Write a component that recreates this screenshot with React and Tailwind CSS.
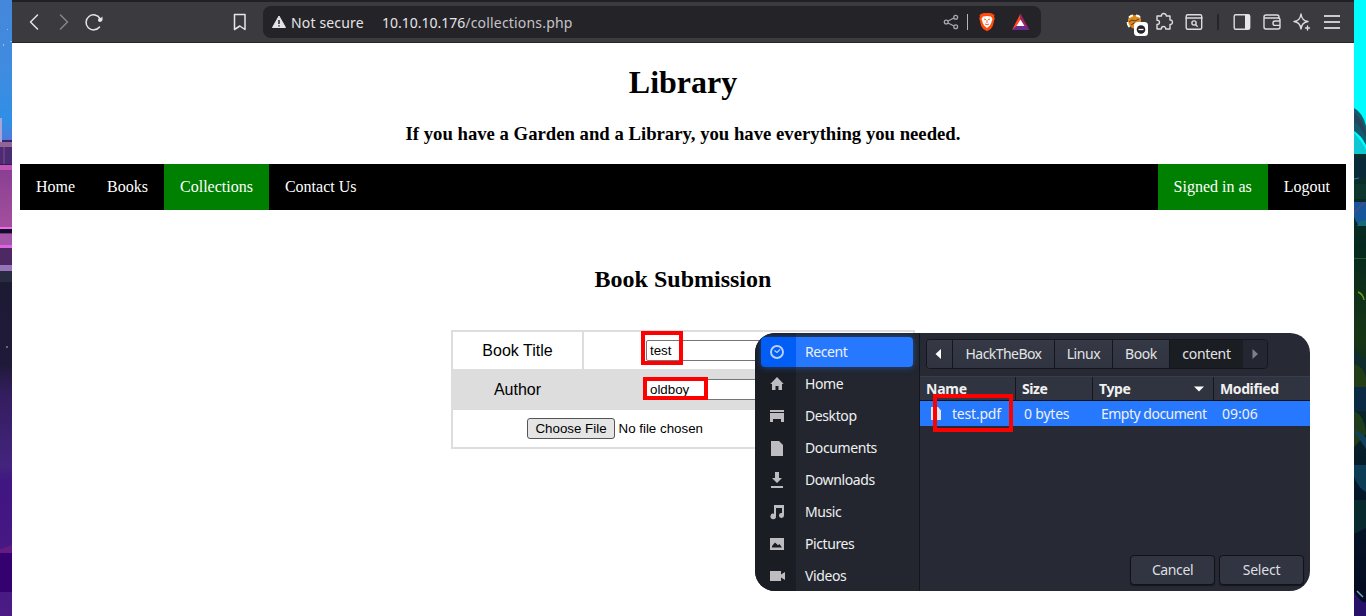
import React from "react";

const navItem = "flex h-[46px] items-center px-4 text-base text-white";

function LeftWallpaper() {
  return (
    <svg className="h-[616px] w-3 shrink-0" viewBox="0 0 12 616" preserveAspectRatio="none" shapeRendering="crispEdges">
      <defs>
        <linearGradient id="sky" x1="0" y1="0" x2="0" y2="1">
          <stop offset="0" stopColor="#4487db" />
          <stop offset=".5" stopColor="#3f8ce0" />
          <stop offset=".85" stopColor="#2f8fe6" />
          <stop offset="1" stopColor="#5079d8" />
        </linearGradient>
        <linearGradient id="wall" x1="0" y1="0" x2="0" y2="1">
          <stop offset="0" stopColor="#8a3f92" />
          <stop offset="1" stopColor="#a44f9e" />
        </linearGradient>
        <linearGradient id="floor" x1="0" y1="0" x2="0" y2="1">
          <stop offset="0" stopColor="#1d1a33" />
          <stop offset=".25" stopColor="#201a3a" />
          <stop offset=".33" stopColor="#331d5e" />
          <stop offset=".55" stopColor="#43247e" />
          <stop offset=".6" stopColor="#401682" />
          <stop offset="1" stopColor="#4c1b85" />
        </linearGradient>
      </defs>
      <rect width="12" height="142" fill="url(#sky)" />
      <rect x="7" y="29" width="1" height="1" fill="#8fc4f2" />
      <rect x="3" y="44" width="1" height="2" fill="#8fc4f2" />
      <rect x="10" y="41" width="2" height="1" fill="#8fc4f2" />
      <rect y="118" width="2" height="24" fill="#a9a3da" />
      <rect x="2" y="140" width="10" height="2" fill="#39236f" />
      <rect y="142" width="12" height="5" fill="#916497" />
      <rect y="147" width="12" height="17" fill="#4a2c72" />
      <rect x="3" y="147" width="2" height="17" fill="#6d3a80" />
      <rect y="164" width="12" height="1" fill="#3b1658" />
      <rect y="165" width="12" height="5" fill="#c057b4" />
      <rect y="170" width="12" height="57" fill="url(#wall)" />
      <rect y="227" width="12" height="2" fill="#f566f1" />
      <rect y="229" width="12" height="4" fill="#100d28" />
      <rect y="233" width="12" height="1" fill="#6c3b79" />
      <rect y="234" width="12" height="11" fill="#a456a8" />
      <rect y="245" width="12" height="3" fill="#e061e4" />
      <rect y="248" width="12" height="17" fill="#4c2963" />
      <rect y="265" width="12" height="6" fill="#9674b7" />
      <rect y="271" width="12" height="11" fill="#292b43" />
      <rect y="282" width="12" height="334" fill="url(#floor)" />
      <rect x="6" y="346" width="2" height="2" fill="#7b5797" />
      <path d="M0 549 12 545V553H0Z" fill="#651a84" />
      <rect y="553" width="12" height="39" fill="#35006f" />
    </svg>
  );
}

function RightWallpaper() {
  return (
    <svg className="h-[616px] w-3 shrink-0" viewBox="0 0 12 616" preserveAspectRatio="none">
      <defs>
        <linearGradient id="night" x1="0" y1="0" x2="0" y2="1">
          <stop offset="0" stopColor="#0d302f" />
          <stop offset=".2" stopColor="#06291f" />
          <stop offset=".4" stopColor="#173515" />
          <stop offset=".5" stopColor="#0a2925" />
          <stop offset=".7" stopColor="#041a2a" />
          <stop offset="1" stopColor="#050820" />
        </linearGradient>
      </defs>
      <rect width="12" height="155" fill="#00fcff" />
      <path d="M0 108Q9 113 12 126V145Q7 135 0 131Z" fill="#145c6c" />
      <path d="M0 113Q8 119 12 132V137Q5 124 0 122Z" fill="#25455c" />
      <path d="M0 133Q8 141 12 150V154H0Z" fill="#10c8d4" />
      <rect y="154" width="12" height="462" fill="url(#night)" />
      <rect y="158" width="12" height="20" fill="#092b39" />
      <path d="M0 179 5 178" stroke="#2478b4" />
      <rect y="184" width="12" height="15" fill="#0d372c" />
      <path d="M0 202H12V224Q5 230 0 217Z" fill="#16579b" />
      <path d="M0 213 11 202" stroke="#8b3c69" />
      <path d="M3 226Q5 220 12 220V226Z" fill="#186a78" />
      <path d="M0 258.500H12" stroke="#235b2c" />
      <path d="M4 292Q9 294 10 300" stroke="#6c9c10" strokeWidth="1.500" fill="none" />
      <path d="M0 347Q6 357 12 358V384H0Z" fill="#102d2e" />
      <path d="M0 364Q9 366 12 378V387H0Z" fill="#233d17" />
      <rect y="387" width="12" height="24" fill="#0b2a43" />
      <path d="M0 411Q11 416 12 434L0 447Z" fill="#203d1b" />
      <path d="M0 431Q7 431 12 438V449Z" fill="#10415a" />
      <path d="M0 465H12V492Q5 489 0 477Z" fill="#0c3d56" />
      <path d="M0 500H12V528L0 534Z" fill="#08292d" />
      <path d="M3 591 9 597" stroke="#67afc0" strokeWidth="1.500" />
      <path d="M0 592Q8 604 12 602V616H0Z" fill="#271269" />
    </svg>
  );
}

function BrowserBar() {
  const line = { fill: "none", stroke: "#e6e5ea", strokeWidth: 1.5, strokeLinecap: "round", strokeLinejoin: "round" };
  return (
    <div className="flex h-[43px] items-start border-b border-t-2 border-b-[#26252a] border-t-[#212026] bg-[#3b3a3f] text-[14px] text-[#e4e3e8]" style={{ fontFamily: '"Noto Sans", sans-serif' }}>
      <svg className="h-10 w-[251px] shrink-0" viewBox="12 2 251 40">
        <g {...line}>
          <path d="M37.500 15 30.500 22 37.500 29" />
          <path d="M60.500 15 67.500 22 60.500 29" stroke="#85848a" />
          <path d="M100 18.500A7.500 7.500 0 1 0 99.500 27" />
          <path d="M234.500 14.500h10.500V29.500l-5.200-3.500-5.300 3.500Z" />
        </g>
        <path d="M98 20.500h4.500v-4Z" fill="#e6e5ea" />
        <circle cx="100" cy="20" r="2" fill="#e6e5ea" />
      </svg>
      <div className="mt-1 flex h-8 w-[778px] shrink-0 items-center rounded-lg bg-[#242328]">
        <svg className="ml-[9px] h-4 w-[14px] shrink-0" viewBox="0 0 14 16">
          <path d="M7 2 13.500 13.500H.5Z" fill="#e4e3e8" stroke="#e4e3e8" strokeLinejoin="round" />
          <path d="M7 6v4M7 11.200v1.300" stroke="#242328" strokeWidth="1.500" />
        </svg>
        <span className="ml-[5px] w-[91px] whitespace-nowrap tracking-[0.15px]">Not secure</span>
        <span className="whitespace-nowrap text-[#c4c3c8]"><span className="text-[#e4e3e8]">10.10.10.176</span><span className="tracking-[0.18px]">/collections.php</span></span>
        <svg className="ml-auto h-8 w-[101px] shrink-0" viewBox="940 6 101 32">
          <g fill="none" stroke="#a9a8ae" strokeWidth="1.300">
            <path d="M948 21 954 18M948 23 954 26" />
            <circle cx="946.200" cy="22" r="1.900" />
            <circle cx="955.700" cy="17.200" r="1.900" />
            <circle cx="955.700" cy="26.800" r="1.900" />
          </g>
          <path d="M967.500 14v16" stroke="#b5b4ba" />
          <path d="m982 13.500 2-.5h6l2 .5 2.500 1.500-.5 2 .8 1-2 8-2 3-3.800 2.200-3.800-2.200-2-3-2-8 .8-1-.5-2Z" fill="#ff4b0c" />
          <path d="m983 16.500 4-.5 4 .5 1.500 2.500-1.500 4.500-1.500 2.500-2.500 2-2.500-2-1.500-2.500-1.500-4.500Z" fill="#fff" />
          <path d="m984 19 2 .8M990 19l-2 .8M987 20v3M985 24l2 .8 2-.8" stroke="#ff4b0c" fill="none" strokeWidth=".9" />
          <path d="M1020.500 13.500 1012 30 1020.500 24Z" fill="#ff4726" />
          <path d="M1020.500 13.500 1029.500 30 1020.500 24Z" fill="#9e1f63" />
          <path d="M1012 30h17.500l-5-4h-8Z" fill="#662d91" />
          <path d="m1020.500 19.500 4 6.500h-8Z" fill="#fff" />
        </svg>
      </div>
      <svg className="h-10 w-[313px] shrink-0" viewBox="1041 2 313 40">
        <path d="M1128 19q2-4 7-4 4 0 6 4v6l-6 4q-5-1-7-6Z" fill="#df8a1c" />
        <path d="M1129 17.500q2-2 4-2M1136 15.500q3 0 4 2M1127.500 22q0 3 2 5" stroke="#fff" strokeWidth="1.800" fill="none" />
        <path d="m1129 22 3-2 3 1 4-2M1131 25l3-2 4 .5" stroke="#5d3820" fill="none" />
        <rect x="1134" y="22" width="14" height="14" rx="3.500" fill="#fff" />
        <circle cx="1141" cy="29.500" r="4.300" fill="#252429" />
        <path d="M1138.500 29.500h5" stroke="#fff" strokeWidth="1.300" />
        <g {...line} stroke="#dddce1" strokeWidth="1.400">
          <path d="M1158 16h3.500c-.7-3 4.800-3.500 4.800 0H1170v4c3.200-.5 3.300 4.800 0 4.500V29h-4.300c0-3.400-4.400-3.200-4.400 0H1157v-4.500c3.200 0 3.500-4.500 0-4.300V16Z" />
          <rect x="1186.200" y="14.700" width="15.500" height="14.600" rx="1.500" />
          <path d="M1186 18h16" />
          <circle cx="1194" cy="23" r="2.100" />
          <path d="m1195.500 24.500 1.700 1.700" />
          <rect x="1234.200" y="14.700" width="15.500" height="14.600" rx="1.500" />
          <path d="M1279 18v-1q0-2-2-2h-11q-2 0-2 2v10q0 2 2 2h12q2 0 2-2v-7q0-2-2-2h-13M1280 21h-5q-2 0-2 2.200t2 2.200h5" />
          <path d="M1301 14q.8 6.800 7 7.500-6.200.7-7 7.500-.8-6.800-7-7.500 6.200-.7 7-7.500ZM1307.500 26v4M1305.500 28h4" />
        </g>
        <rect x="1245" y="15" width="5" height="14" fill="#e7e6ec" />
        <path d="M1218 14v16" stroke="#242328" strokeWidth="1.800" />
        <path d="M1324 16h16M1324 22h16M1324 28h16" stroke="#cbcacf" strokeWidth="1.800" />
      </svg>
    </div>
  );
}

const icons = {
  Recent: <><circle cx="8" cy="8" r="6" fill="none" stroke="#b9d2ff" strokeWidth="1.900" /><path d="m5.500 6.500 2.500 2 3-3" fill="none" stroke="#b9d2ff" strokeWidth="1.200" /></>,
  Home: <path d="M8 1 14.700 8H13v6H9.500v-4h-3v4H3V8H1.300Z" />,
  Desktop: <path d="M1 2h14v2H1Zm0 3h14v9h-3v-3H4v3H1Z" />,
  Documents: <path d="M2 1h8l4 4v11H2Z" />,
  Downloads: <path d="M6 0h4v6h3l-5 5-5-5h3ZM2 14h12v2H2Z" />,
  Music: <path d="M5 1h10v10.500a2.500 2.500 0 1 1-2-2.500V4H7v8.500a2.800 2.800 0 1 1-2-2.700Z" />,
  Pictures: <path fillRule="evenodd" d="M1 2h14v12H1Zm2 9.500h10L10.500 8 9 9.200 6 6.500 3 10Z" />,
  Videos: <path d="M1 3h11v3.500L16 4v8l-4-2.500V13H1Z" />,
};

function Place({ name }) {
  const active = name === "Recent";
  return (
    <div className="flex h-8 items-center px-1.5">
      <div className={active ? "flex h-[30px] w-[152px] items-center rounded-[4px] bg-[linear-gradient(90deg,#005df5_35px,#2678ff_35px)] shadow-[0_0_7px_#2368df99]" : "flex h-[30px] w-[152px] items-center"}>
        <svg className="ml-2 h-4 w-4" viewBox="0 0 16 16" fill="#bdbdc0">{icons[name]}</svg>
        <span className="ml-5">{name}</span>
      </div>
    </div>
  );
}

function FilePicker() {
  const crumb = "flex h-full shrink-0 items-center justify-center border-r border-[#14161d] bg-[linear-gradient(#353945,#303440)]";
  const head = "flex h-full shrink-0 items-center border-r border-[#14161d]";
  const button = "flex h-[30px] items-center justify-center rounded-[4px] border border-[#111319] bg-[#313541] shadow-[0_1px_1px_#15171d]";
  return (
    <div className="absolute left-[755px] top-[333px] flex h-[258px] w-[555px] overflow-hidden rounded-[20px] bg-[#272a34] text-[14px] leading-5 tracking-[-0.4px] text-[#f0f0f1]" style={{ fontFamily: '"Noto Sans", sans-serif' }}>
      <div className="w-[165px] shrink-0 border-r border-[#14161c] bg-[linear-gradient(90deg,#1a1d24_41px,#23262f_41px)] pt-[3px]">
        {Object.keys(icons).map((name) => <Place key={name} name={name} />)}
      </div>
      <div className="flex w-[390px] flex-col">
        <div className="ml-1.5 mt-1.5 flex h-[30px] w-[342px] overflow-hidden rounded-[4px] border border-[#14161d] text-[#e3e4e6]">
          <div className={`${crumb} w-[26px]`}><svg className="mr-1 h-3 w-3" viewBox="0 0 12 12"><path d="M9 1v10L3.500 6Z" fill="#fff" /></svg></div>
          <div className={`${crumb} w-[102px] tracking-[-0.55px]`}>HackTheBox</div>
          <div className={`${crumb} w-[58px]`}>Linux</div>
          <div className={`${crumb} w-[57px]`}>Book</div>
          <div className="flex w-[73px] shrink-0 items-center justify-center bg-[#1a1d22] tracking-[-0.3px]">content</div>
          <div className="flex flex-1 items-center justify-center bg-[#242731]"><svg className="h-3 w-3" viewBox="0 0 12 12"><path d="M3.500 1v10L9 6Z" fill="#7d8087" /></svg></div>
        </div>
        <div className="mt-[7px] flex h-[25px] border-b border-t border-b-[#101319] border-t-[#393d48] bg-[#303440] font-bold">
          <div className={`${head} w-24 pl-1.5 tracking-[-0.2px]`}>Name</div>
          <div className={`${head} w-[77px] pl-1.5`}>Size</div>
          <div className={`${head} w-[121px] justify-between pl-1.5 pr-2`}>Type<svg className="h-3 w-3" viewBox="0 0 12 12"><path d="M1 3.500h10L6 8.500Z" fill="#fff" /></svg></div>
          <div className="flex items-center pl-1.5">Modified</div>
        </div>
        <div className="flex h-[25px] items-center bg-[#2678ff]">
          <svg className="ml-2 h-4 w-4 shrink-0" viewBox="0 0 16 16"><path d="M3 1h7l3 3.500V14H3Z" fill="#e6e6e8" /></svg>
          <span className="ml-2 w-[72px] tracking-[-0.2px]">test.pdf</span>
          <span className="w-[77px] tracking-[-0.2px]">0 bytes</span>
          <span className="w-[121px] whitespace-nowrap tracking-[-0.5px]">Empty document</span>
          <span className="tracking-normal">09:06</span>
        </div>
        <div className="mb-1.5 mr-1.5 mt-auto flex justify-end gap-1 text-[#dedfe2]">
          <div className={`${button} w-[85px]`}>Cancel</div>
          <div className={`${button} w-[85px] tracking-[-0.2px]`}>Select</div>
        </div>
      </div>
    </div>
  );
}

function BookForm() {
  const input = "h-[21px] w-[206px] rounded-[2px] border border-[#767676] bg-white pl-[3.500px] text-[13.333px] leading-[20px]";
  return (
    <div className="mx-auto mt-[37px] flex h-[119px] w-[464px] flex-col border-2 border-[#ddd]" style={{ fontFamily: '"Liberation Sans", Arial, sans-serif' }}>
      <div className="flex h-[37px]">
        <div className="flex w-[131px] items-center justify-center border-r-2 border-[#ddd]">Book Title</div>
        <div className="flex flex-1 items-center justify-center"><div className={input}>test</div></div>
      </div>
      <div className="flex h-[41px] bg-[#ddd]">
        <div className="flex w-[131px] items-center justify-center border-r-2 border-[#ddd]">Author</div>
        <div className="flex flex-1 items-center justify-center"><div className={input}>oldboy</div></div>
      </div>
      <div className="flex h-[37px] items-center pl-[74px] text-[13.333px]">
        <div className="flex h-[21px] w-[88px] items-center justify-center rounded-[3px] border border-[#555] bg-[#e5e5e5]">Choose File</div>
        <span className="ml-[3.500px]">No file chosen</span>
      </div>
    </div>
  );
}

export default function App() {
  return (
    <div className="relative flex h-[616px] w-[1366px] overflow-hidden bg-white text-black">
      <LeftWallpaper />
      <div className="w-[1342px] shrink-0">
        <BrowserBar />
        <main className="px-2" style={{ fontFamily: '"Liberation Serif", "Times New Roman", serif' }}>
          <h1 className="pt-[21px] text-center text-[32px] font-bold leading-[37px]">Library</h1>
          <h3 className="mt-[22px] text-center text-[18.720px] font-bold leading-[21px]">If you have a Garden and a Library, you have everything you needed.</h3>
          <nav className="mt-5 flex bg-black">
            <div className={navItem}>Home</div>
            <div className={navItem}>Books</div>
            <div className={`${navItem} bg-[#008000]`}>Collections</div>
            <div className={navItem}>Contact Us</div>
            <div className={`${navItem} ml-auto bg-[#008000]`}>Signed in as</div>
            <div className={navItem}>Logout</div>
          </nav>
          <h2 className="mt-14 text-center text-2xl font-bold leading-[27px]">Book Submission</h2>
          <BookForm />
        </main>
      </div>
      <RightWallpaper />
      <FilePicker />
      <div className="absolute left-[641px] top-[331px] h-[34px] w-[42px] border-4 border-[#f00]" />
      <div className="absolute left-[643px] top-[377px] h-[23px] w-[65px] border-4 border-[#f00]" />
      <div className="absolute left-[933px] top-[394px] h-[38px] w-20 border-4 border-[#f00]" />
    </div>
  );
}
